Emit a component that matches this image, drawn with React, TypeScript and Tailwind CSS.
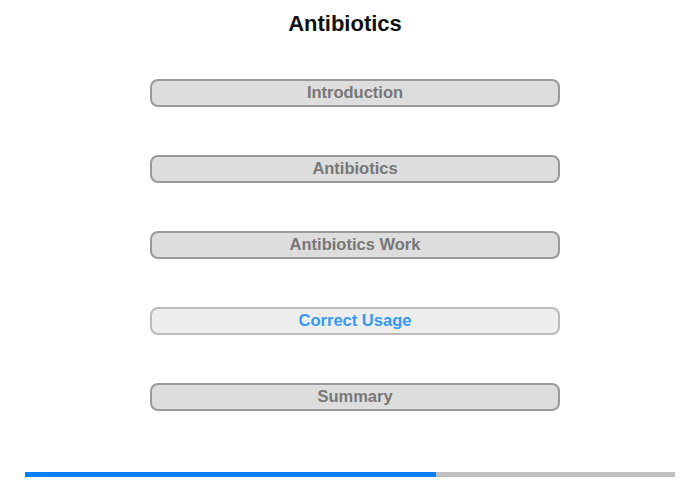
const items = [
  { label: 'Introduction', active: false },
  { label: 'Antibiotics', active: false },
  { label: 'Antibiotics Work', active: false },
  { label: 'Correct Usage', active: true },
  { label: 'Summary', active: false },
]

export default function App() {
  return (
    <div className="w-[700px] h-[480px] bg-white flex flex-col" style={{ fontFamily: '"Liberation Sans", Arial, sans-serif' }}>
      <h1 className="mt-[11px] w-[690px] text-center text-[22px] leading-[26px] font-bold text-[#111]">Antibiotics</h1>

      <div className="mt-[42px] ml-[150px] flex flex-col gap-[48px]">
        {items.map((item) => (
          <button
            key={item.label}
            type="button"
            className={
              item.active
                ? 'w-[410px] h-[28px] pb-[2px] rounded-[8px] border-2 border-[#bbbbbb] bg-[#eeeeee] text-[#3399ff] text-[16.5px] font-bold leading-none'
                : 'w-[410px] h-[28px] pb-[2px] rounded-[8px] border-2 border-[#999999] bg-[#dddddd] text-[#777777] text-[16.5px] font-bold leading-none'
            }
          >
            {item.label}
          </button>
        ))}
      </div>

      <div className="mt-auto mb-[3px] ml-[25px] w-[650px] h-[5px] flex">
        <div className="w-[411px] bg-[#0080ff]" />
        <div className="flex-1 bg-[#c0c0c0]" />
      </div>
    </div>
  )
}
